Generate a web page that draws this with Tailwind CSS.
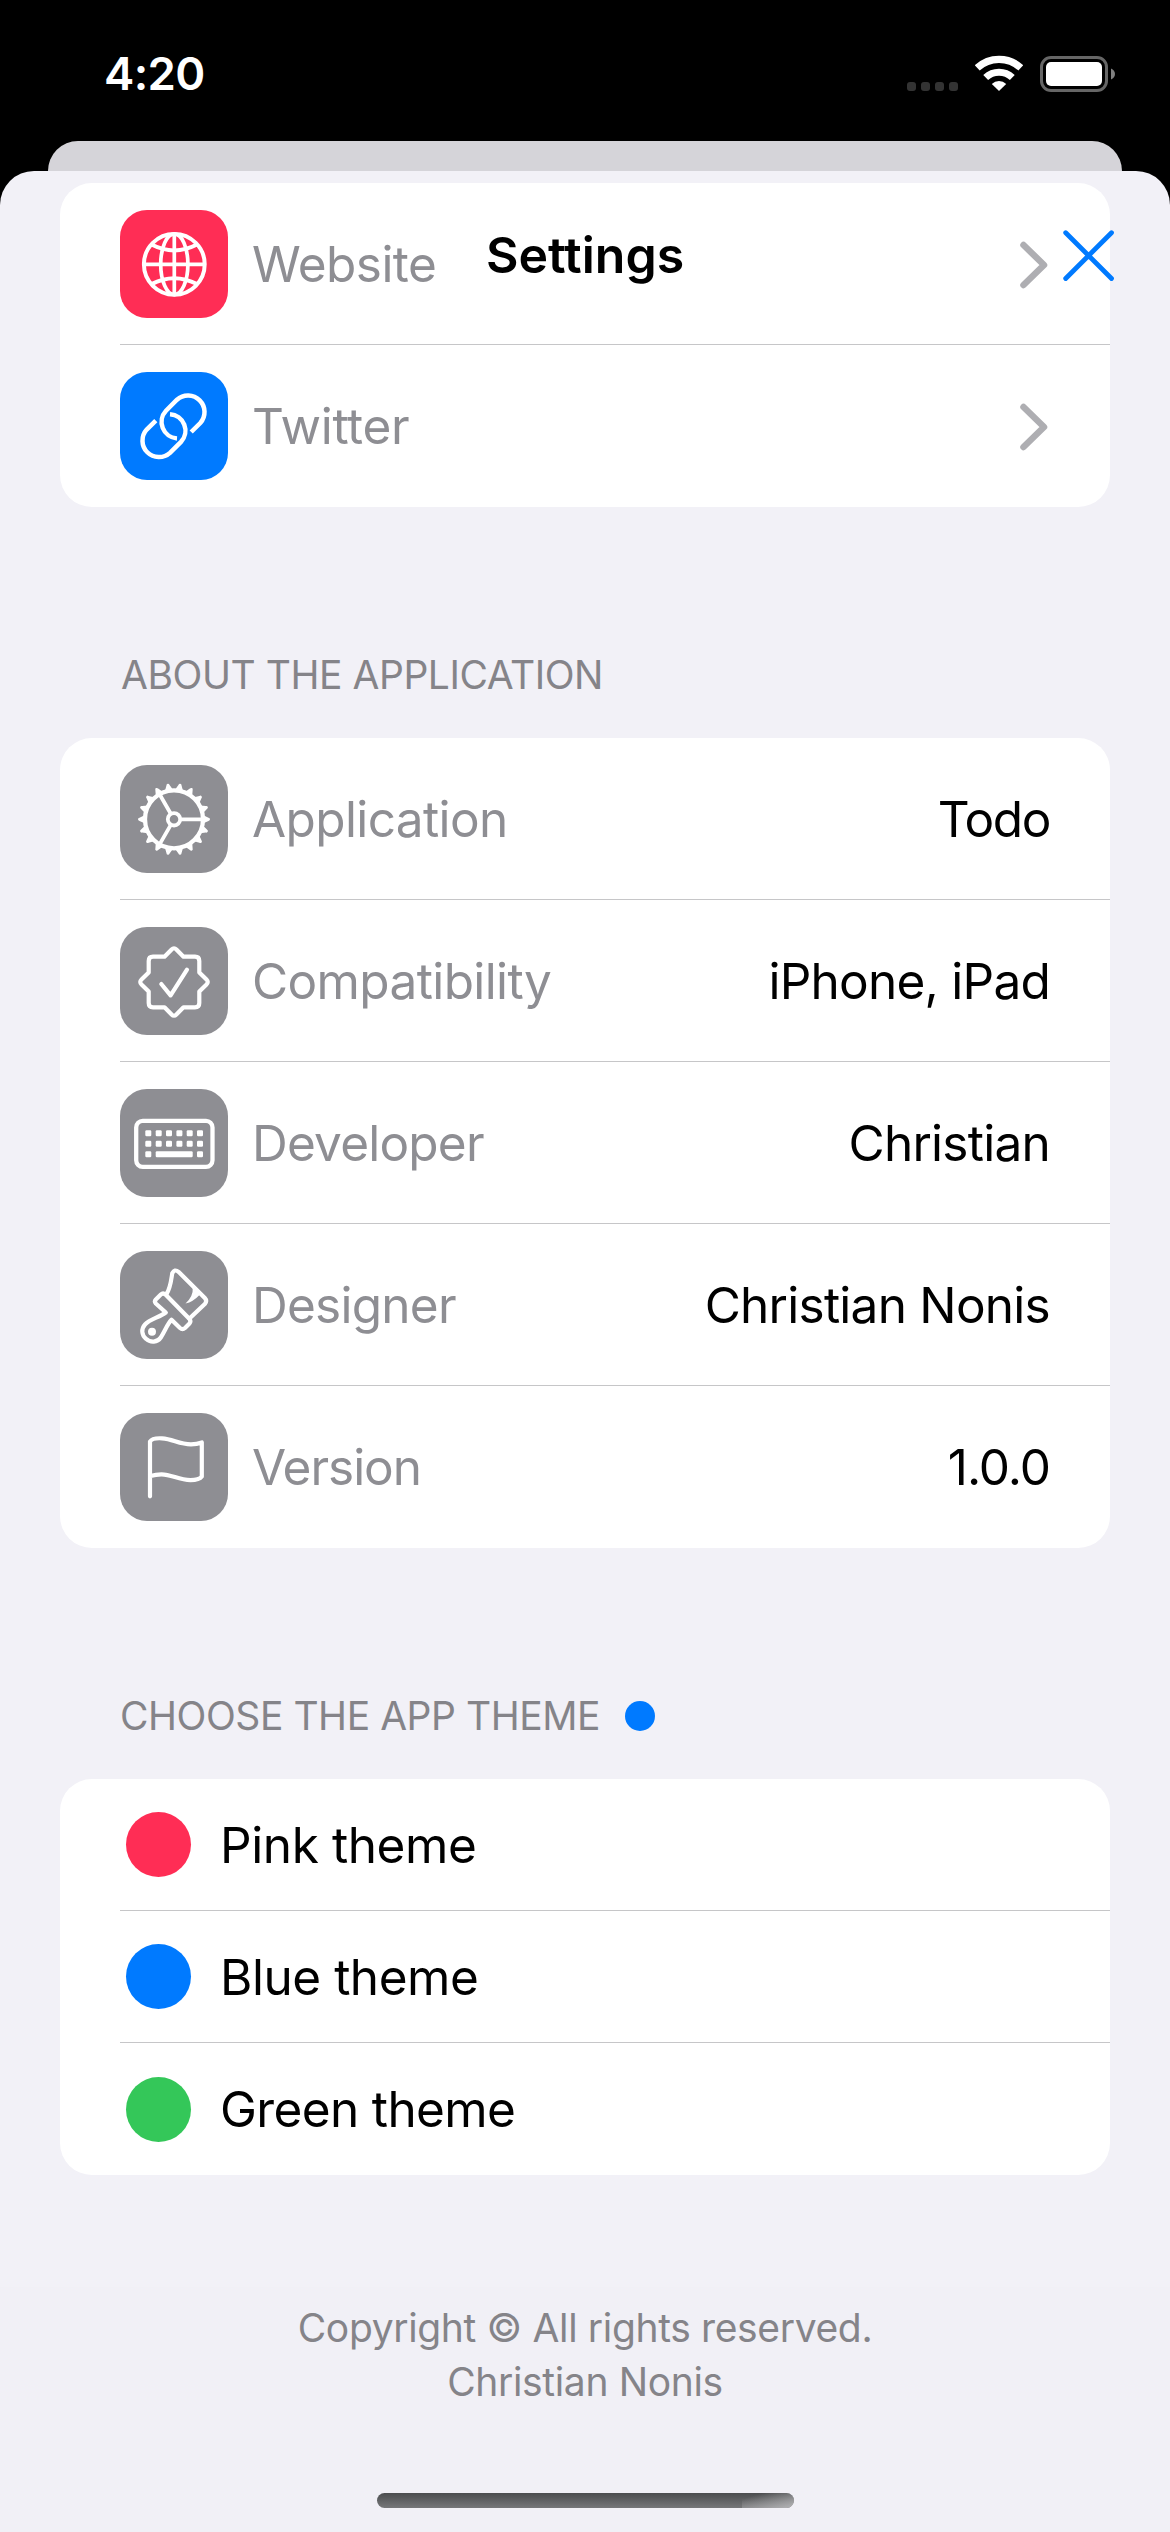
<!DOCTYPE html>
<html lang="en">
<head>
<meta charset="utf-8">
<title>Settings</title>
<script src="https://cdn.jsdelivr.net/npm/@tailwindcss/browser@4"></script>
</head>
<body class="bg-black font-['Inter',sans-serif]">
<div class="relative flex h-[2532px] w-[1170px] flex-col overflow-hidden">

  <!-- Status bar -->
  <div class="flex h-[141px] shrink-0 items-start justify-between pl-[104px] pr-[55px]">
    <span class="pt-[47px] text-[45.5px] font-semibold leading-[54px] tracking-[-0.65px] text-white">4:20</span>
    <div class="flex items-start pt-[55px]">
      <div class="mr-[17px] mt-[27px] flex gap-[5px]">
        <i class="size-[9px] rounded-[3px] bg-[#333]"></i>
        <i class="size-[9px] rounded-[3px] bg-[#333]"></i>
        <i class="size-[9px] rounded-[3px] bg-[#333]"></i>
        <i class="size-[9px] rounded-[3px] bg-[#333]"></i>
      </div>
      <svg class="h-9 w-12" viewBox="0 0 48 36" fill="none" stroke="#fff">
        <path d="M2.2 12.9A32 32 0 0 1 45.8 12.9" stroke-width="7.3"/>
        <path d="M10.7 22.6A19.2 19.2 0 0 1 37.3 22.6" stroke-width="7"/>
        <path d="M24 36L16.8 28.9A10.3 10.3 0 0 1 31.2 28.9Z" fill="#fff" stroke="none"/>
      </svg>
      <svg class="ml-[17px] mt-px h-9 w-[75px]" viewBox="0 0 75 36">
        <rect x="1.5" y="1.5" width="65" height="33" rx="9.5" fill="none" stroke="#666" stroke-width="3"/>
        <rect x="6" y="6" width="56" height="24" rx="5" fill="#fff"/>
        <path d="M71 12.5C73.5 13.5 75 15.500 75 18S73.5 22.500 71 23.500Z" fill="#808080"/>
      </svg>
    </div>
  </div>

  <!-- Presenting sheet peeking out behind -->
  <div class="mx-12 h-[70px] shrink-0 rounded-t-[30px] bg-[#d5d4d9]"></div>

  <!-- Settings sheet -->
  <div class="relative -mt-10 flex flex-1 flex-col rounded-t-[34px] bg-[#f2f1f7] pt-3">

    <section class="mx-[60px] rounded-[32px] bg-white pl-[60px]">
      <div class="flex h-[162px] items-center border-b border-[#c6c6c8] pr-[60px]">
        <svg class="size-[108px] rounded-[27px] bg-[#ff2d55]" viewBox="0 0 108 108" fill="none" stroke="#fff" stroke-width="4">
          <circle cx="54.300" cy="54.300" r="30.400"/>
          <path d="M54.300 24V85M24 54.300H85" stroke-width="3.700"/>
          <ellipse cx="54.300" cy="54.300" rx="13.600" ry="30.400" stroke-width="3.700"/>
          <path d="M31.500 34.500Q54.300 46.300 77 34.500M31.500 74.100Q54.300 62.300 77 74.100"/>
        </svg>
        <span class="ml-6 flex-1 pt-0.5 text-[49.5px] leading-none tracking-[-0.54px] text-[#8e8e93]">Website</span>
        <svg class="mt-0.5 h-12 w-[30px]" viewBox="0 0 30 48" fill="none" stroke="#aeaeb2" stroke-width="6.500" stroke-linecap="round" stroke-linejoin="round"><path d="M3.500 4L24 24L3.500 44"/></svg>
      </div>
      <div class="flex h-[162px] items-center pr-[60px]">
        <svg class="size-[108px] rounded-[27px] bg-[#007aff]" viewBox="0 0 108 108" fill="none" stroke="#fff" stroke-width="4.500">
          <path d="M71.200 60L80.300 51A16.500 16.500 0 0 0 57 27.700L46 38.700A16.500 16.500 0 0 0 57 66.400"/>
          <path d="M35.800 48.600L26.700 57.600A16.500 16.500 0 0 0 50 80.900L61 69.900A16.500 16.500 0 0 0 50 42.200"/>
        </svg>
        <span class="ml-6 flex-1 pt-0.5 text-[49.5px] leading-none tracking-[-0.32px] text-[#8e8e93]">Twitter</span>
        <svg class="mt-0.5 h-12 w-[30px]" viewBox="0 0 30 48" fill="none" stroke="#aeaeb2" stroke-width="6.500" stroke-linecap="round" stroke-linejoin="round"><path d="M3.500 4L24 24L3.500 44"/></svg>
      </div>
    </section>

    <h2 class="h-[231px] pl-[121px] pt-[141px] text-[39px] leading-[54px] tracking-[-0.45px] text-[#858489]">ABOUT THE APPLICATION</h2>

    <section class="mx-[60px] rounded-[32px] bg-white pl-[60px]">
      <div class="flex h-[162px] items-center border-b border-[#c6c6c8] pr-[60px]">
        <svg class="size-[108px] rounded-[27px] bg-[#8e8e93]" viewBox="0 0 108 108" fill="none" stroke="#fff" stroke-width="4">
          <defs><path id="tooth" d="M83.500 50.300L88.500 52.700Q90 53 90 54.300T88.500 55.900L83.500 58.300Z" fill="#fff" stroke="none"/></defs>
          <circle cx="54" cy="54.300" r="29" stroke-width="4.300"/>
          <circle cx="54" cy="54.300" r="6.200" stroke-width="3.800"/>
          <path d="M61 54.300H82M50.500 48.200L40 30M50.500 60.400L40 78.600" stroke-width="3.800"/>
          <use href="#tooth"/>
          <use href="#tooth" transform="rotate(20 54 54.300)"/>
          <use href="#tooth" transform="rotate(40 54 54.300)"/>
          <use href="#tooth" transform="rotate(60 54 54.300)"/>
          <use href="#tooth" transform="rotate(80 54 54.300)"/>
          <use href="#tooth" transform="rotate(100 54 54.300)"/>
          <use href="#tooth" transform="rotate(120 54 54.300)"/>
          <use href="#tooth" transform="rotate(140 54 54.300)"/>
          <use href="#tooth" transform="rotate(160 54 54.300)"/>
          <use href="#tooth" transform="rotate(180 54 54.300)"/>
          <use href="#tooth" transform="rotate(200 54 54.300)"/>
          <use href="#tooth" transform="rotate(220 54 54.300)"/>
          <use href="#tooth" transform="rotate(240 54 54.300)"/>
          <use href="#tooth" transform="rotate(260 54 54.300)"/>
          <use href="#tooth" transform="rotate(280 54 54.300)"/>
          <use href="#tooth" transform="rotate(300 54 54.300)"/>
          <use href="#tooth" transform="rotate(320 54 54.300)"/>
          <use href="#tooth" transform="rotate(340 54 54.300)"/>
        </svg>
        <span class="ml-6 flex-1 pt-0.5 text-[49.5px] leading-none tracking-[-0.62px] text-[#8e8e93]">Application</span>
        <span class="pt-0.5 text-[49.5px] leading-none tracking-[-1.36px]">Todo</span>
      </div>
      <div class="flex h-[162px] items-center border-b border-[#c6c6c8] pr-[60px]">
        <svg class="size-[108px] rounded-[27px] bg-[#8e8e93]" viewBox="0 0 108 108" fill="none" stroke="#fff" stroke-width="4.200" stroke-linecap="round" stroke-linejoin="round">
          <path d="M44.500 29.700L51.600 22.500Q54 20 56.400 22.500L63.500 29.700H75Q79.300 29.700 79.300 34V45.500L86.500 52.600Q89 55 86.500 57.400L79.300 64.500V76Q79.300 80.300 75 80.300H63.500L56.400 87.500Q54 90 51.600 87.500L44.500 80.300H33Q28.700 80.300 28.700 76V64.500L21.500 57.400Q19 55 21.500 52.600L28.700 45.500V34Q28.700 29.700 33 29.700Z"/>
          <path d="M41.300 57L50.600 68.300L67 42.700"/>
        </svg>
        <span class="ml-6 flex-1 pt-0.5 text-[49.5px] leading-none tracking-[-0.62px] text-[#8e8e93]">Compatibility</span>
        <span class="pt-0.5 text-[49.5px] leading-none tracking-[-0.75px]">iPhone, iPad</span>
      </div>
      <div class="flex h-[162px] items-center border-b border-[#c6c6c8] pr-[60px]">
        <svg class="size-[108px] rounded-[27px] bg-[#8e8e93]" viewBox="0 0 108 108" fill="#fff">
          <rect x="16.200" y="31.900" width="76.300" height="45.900" rx="6.500" fill="none" stroke="#fff" stroke-width="4.300"/>
          <rect x="25.300" y="41.300" width="6" height="6" rx="1.200"/><rect x="35.700" y="41.300" width="6" height="6" rx="1.200"/><rect x="46" y="41.300" width="6" height="6" rx="1.200"/><rect x="56.400" y="41.300" width="6" height="6" rx="1.200"/><rect x="66.700" y="41.300" width="6" height="6" rx="1.200"/><rect x="77" y="41.300" width="6" height="6" rx="1.200"/>
          <rect x="25.300" y="51.800" width="6" height="6" rx="1.200"/><rect x="35.700" y="51.800" width="6" height="6" rx="1.200"/><rect x="46" y="51.800" width="6" height="6" rx="1.200"/><rect x="56.400" y="51.800" width="6" height="6" rx="1.200"/><rect x="66.700" y="51.800" width="6" height="6" rx="1.200"/><rect x="77" y="51.800" width="6" height="6" rx="1.200"/>
          <rect x="25.300" y="62.200" width="6" height="6" rx="1.200"/><rect x="35.700" y="62.200" width="37" height="6" rx="1.200"/><rect x="77" y="62.200" width="6" height="6" rx="1.200"/>
        </svg>
        <span class="ml-6 flex-1 pt-0.5 text-[49.5px] leading-none tracking-[-0.78px] text-[#8e8e93]">Developer</span>
        <span class="pt-0.5 text-[49.5px] leading-none tracking-[-0.74px]">Christian</span>
      </div>
      <div class="flex h-[162px] items-center border-b border-[#c6c6c8] pr-[60px]">
        <svg class="size-[108px] rounded-[27px] bg-[#8e8e93]" viewBox="0 0 108 108" fill="none" stroke="#fff" stroke-width="4.200" stroke-linecap="round" stroke-linejoin="round">
          <path d="M46.500 43C50.500 37 51 30 52.200 22.500Q54.500 17.500 58.500 20.800L84.800 47Q87.500 50 84.800 53L69.500 67.500"/>
          <path d="M45.500 43.500Q43 41.500 40.800 43.500L35.800 48.500Q34 50.500 35.800 52.500L45.800 61.500C39 66.500 30 68 25 73.500C21 78 21.500 84 26 87.800C30.500 92 37.500 91.500 40.800 86.500C45 80 47 73.500 51.500 68.800L60 77Q62.500 79.300 65 77L69.500 72.500Q71.300 70.300 69.500 68Z"/>
          <path d="M72.700 37Q73.500 45 65.500 52.500Q73 51 80 43.500Z" fill="#fff" stroke="none"/>
          <circle cx="32" cy="80.700" r="4" fill="#fff" stroke="none"/>
        </svg>
        <span class="ml-6 flex-1 pt-0.5 text-[49.5px] leading-none tracking-[-0.74px] text-[#8e8e93]">Designer</span>
        <span class="pt-0.5 text-[49.5px] leading-none tracking-[-0.74px]">Christian Nonis</span>
      </div>
      <div class="flex h-[162px] items-center pr-[60px]">
        <svg class="size-[108px] rounded-[27px] bg-[#8e8e93]" viewBox="0 0 108 108" fill="none" stroke="#fff" stroke-width="4.200" stroke-linecap="round" stroke-linejoin="round">
          <path d="M30 83.300V28.500C31.500 26 37 25 42 25.300C53 26 59 31.300 71 31.300C75 31.300 79 30.500 81.800 29.500V63.500C80 66 75.500 67.100 70.500 67.100C58.500 67.100 52 61.400 41.500 61.300C37 61.300 33 62.200 30.500 63"/>
        </svg>
        <span class="ml-6 flex-1 pt-0.5 text-[49.5px] leading-none tracking-[-1.03px] text-[#8e8e93]">Version</span>
        <span class="pt-0.5 text-[49.5px] leading-none tracking-[-1.03px]">1.0.0</span>
      </div>
    </section>

    <div class="flex h-[231px] items-start pl-[120px] pt-[141px]">
      <h2 class="text-[39px] leading-[54px] tracking-[-0.45px] text-[#858489]">CHOOSE THE APP THEME</h2>
      <i class="ml-[25px] mt-3 size-[30px] rounded-full bg-[#007aff]"></i>
    </div>

    <section class="mx-[60px] rounded-[32px] bg-white pl-[60px]">
      <div class="flex h-[132px] items-center border-b border-[#c6c6c8] pl-[6px]">
        <i class="size-[65px] rounded-full bg-[#ff2d55]"></i>
        <span class="ml-[29px] pt-0.5 text-[49.5px] leading-none tracking-[-0.4px]">Pink theme</span>
      </div>
      <div class="flex h-[132px] items-center border-b border-[#c6c6c8] pl-[6px]">
        <i class="size-[65px] rounded-full bg-[#007aff]"></i>
        <span class="ml-[29px] pt-0.5 text-[49.5px] leading-none tracking-[-0.46px]">Blue theme</span>
      </div>
      <div class="flex h-[132px] items-center pl-[6px]">
        <i class="size-[65px] rounded-full bg-[#34c759]"></i>
        <span class="ml-[29px] pt-0.5 text-[49.5px] leading-none tracking-[-0.63px]">Green theme</span>
      </div>
    </section>

    <footer class="mt-28 flex flex-1 flex-col items-center bg-[#f1f0f6] pt-[14px] text-[39px] leading-[54px] tracking-[-0.35px] text-[#858489]">
      <p>Copyright © All rights reserved.</p>
      <p>Christian Nonis</p>
    </footer>

    <!-- Floating navigation title and close button -->
    <h1 class="absolute inset-x-0 top-[57px] text-center text-[50px] font-semibold leading-[54px]">Settings</h1>
    <svg class="absolute left-[1063px] top-[59px] size-[52px]" viewBox="0 0 52 52" stroke="#007aff" stroke-width="4.800" stroke-linecap="round"><path d="M2.700 2.700L48.500 48.500M48.500 2.700L2.700 48.500"/></svg>
    <!-- Home indicator -->
    <div class="absolute bottom-6 left-[377px] h-[15px] w-[417px] overflow-hidden rounded-full bg-linear-to-b from-[#4c4d4f] to-[#767779]">
      <div class="ml-auto h-full w-[52px] bg-linear-to-br from-transparent from-20% to-[#b4b4b6]"></div>
    </div>
  </div>
</div>
</body>
</html>
